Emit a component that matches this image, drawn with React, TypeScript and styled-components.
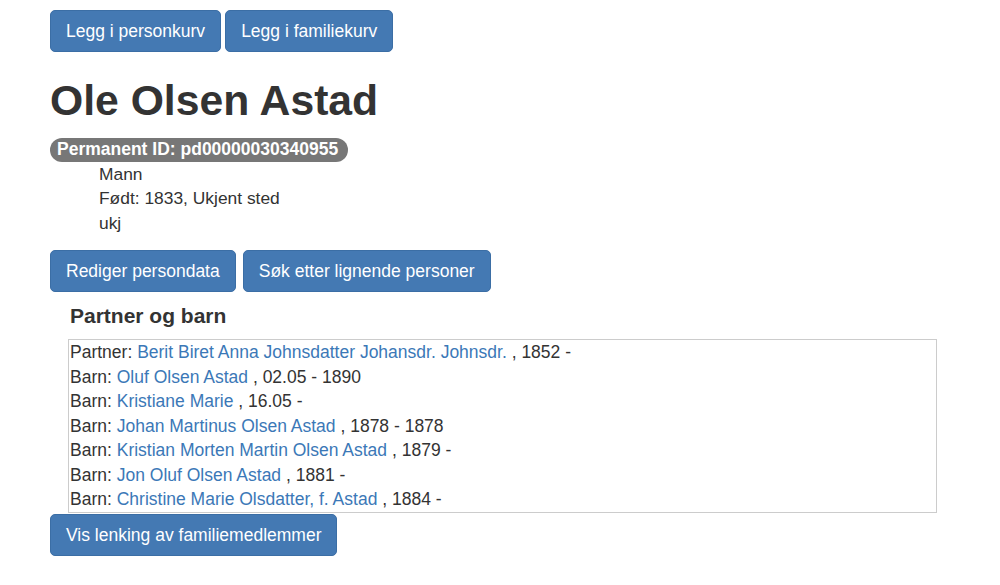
import React from "react";
import styled, { createGlobalStyle } from "styled-components";

const GlobalStyle = createGlobalStyle`
  html, body {
    margin: 0;
    padding: 0;
    background: #ffffff;
  }
  body {
    font-family: "Liberation Sans", Arial, Helvetica, sans-serif;
    font-size: 17.4px;
    line-height: 24.5px;
    color: #333333;
  }
`;

const Page = styled.div`
  padding: 10px 50px 20px 50px;
`;

const ButtonRow = styled.div<{ $gap: number; $top?: number }>`
  display: flex;
  gap: ${(p) => p.$gap}px;
  margin-top: ${(p) => p.$top ?? 0}px;
`;

const Button = styled.button`
  font-family: inherit;
  font-size: 17.5px;
  line-height: 24px;
  color: #ffffff;
  background: #4479b3;
  border: 1px solid #3b6ea5;
  border-radius: 5px;
  padding: 8px 15px;
  cursor: pointer;
  white-space: nowrap;
`;

const Title = styled.h1`
  margin: 25px 0 14px 0;
  font-size: 42.7px;
  line-height: 46px;
  font-weight: 700;
  color: #333333;
`;

const IdBadge = styled.span`
  display: inline-flex;
  align-items: center;
  height: 24px;
  padding: 0 10px 0 7px;
  border-radius: 12px;
  background: #777777;
  color: #ffffff;
  font-size: 17.5px;
  font-weight: 700;
  line-height: 1;
`;

const Facts = styled.div`
  padding-left: 49px;
`;

const FactLine = styled.div`
  line-height: 24.5px;
`;

const Section = styled.section`
  padding-left: 18px;
  width: 869px;
`;

const SectionTitle = styled.h4`
  margin: 12px 0 12px 2px;
  font-size: 21px;
  line-height: 23px;
  font-weight: 700;
  color: #333333;
`;

const RelationBox = styled.div`
  border: 1px solid #cccccc;
  padding: 0 1px;
  font-size: 17.5px;
`;

const RelationLine = styled.div`
  line-height: 24.5px;
  white-space: nowrap;
`;

const PersonLink = styled.a`
  color: #3b78b7;
  text-decoration: none;
`;

type Relation = { role: string; name: string; dates: string };

const relations: Relation[] = [
  { role: "Partner", name: "Berit Biret Anna Johnsdatter Johansdr. Johnsdr.", dates: "1852 -" },
  { role: "Barn", name: "Oluf Olsen Astad", dates: "02.05 - 1890" },
  { role: "Barn", name: "Kristiane Marie", dates: "16.05 -" },
  { role: "Barn", name: "Johan Martinus Olsen Astad", dates: "1878 - 1878" },
  { role: "Barn", name: "Kristian Morten Martin Olsen Astad", dates: "1879 -" },
  { role: "Barn", name: "Jon Oluf Olsen Astad", dates: "1881 -" },
  { role: "Barn", name: "Christine Marie Olsdatter, f. Astad", dates: "1884 -" },
];

export default function App() {
  return (
    <>
      <GlobalStyle />
      <Page>
        <ButtonRow $gap={4}>
          <Button>Legg i personkurv</Button>
          <Button>Legg i familiekurv</Button>
        </ButtonRow>

        <Title>Ole Olsen Astad</Title>
        <IdBadge>Permanent ID: pd00000030340955</IdBadge>

        <Facts>
          <FactLine>Mann</FactLine>
          <FactLine>Født: 1833, Ukjent sted</FactLine>
          <FactLine>ukj</FactLine>
        </Facts>

        <ButtonRow $gap={7} $top={15}>
          <Button>Rediger persondata</Button>
          <Button>Søk etter lignende personer</Button>
        </ButtonRow>

        <Section>
          <SectionTitle>Partner og barn</SectionTitle>
          <RelationBox>
            {relations.map((r, i) => (
              <RelationLine key={i}>
                {r.role}: <PersonLink href="#">{r.name}</PersonLink> , {r.dates}
              </RelationLine>
            ))}
          </RelationBox>
        </Section>

        <ButtonRow $gap={4} $top={1}>
          <Button>Vis lenking av familiemedlemmer</Button>
        </ButtonRow>
      </Page>
    </>
  );
}
